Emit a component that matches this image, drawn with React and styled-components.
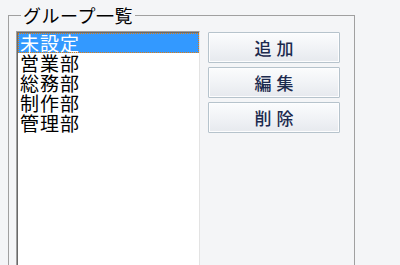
import React, { useState } from "react";
import styled, { createGlobalStyle } from "styled-components";

const GlobalStyle = createGlobalStyle`
  html, body {
    margin: 0;
    padding: 0;
    background: #f4f5f7;
    overflow: hidden;
  }
`;

const groups = ["未設定", "営業部", "総務部", "制作部", "管理部"];
const actions = ["追加", "編集", "削除"];

const App = () => {
  const [selected, setSelected] = useState(0);

  return (
    <Page>
      <GlobalStyle />
      <GroupBox>
        <Legend>グループ一覧</Legend>
        <Body>
          <ListBox>
            {groups.map((name, i) => (
              <ListItem
                key={name}
                $active={i === selected}
                onClick={() => setSelected(i)}
              >
                {name}
              </ListItem>
            ))}
          </ListBox>
          <ButtonColumn>
            {actions.map((label) => (
              <ActionButton key={label}>{label}</ActionButton>
            ))}
          </ButtonColumn>
        </Body>
      </GroupBox>
    </Page>
  );
};

const Page = styled.div`
  width: 400px;
  height: 265px;
  padding: 2px 0 0 8px;
  box-sizing: border-box;
  font-family: "Noto Sans CJK JP", "Noto Sans", sans-serif;
`;

const GroupBox = styled.fieldset`
  width: 347px;
  height: 300px;
  box-sizing: border-box;
  margin: 0;
  padding: 3px 14px 0 7px;
  border: 1px solid #a0a0a0;
  min-inline-size: 0;
`;

const Legend = styled.legend`
  margin-left: 5px;
  padding: 0 2px 0 2px;
  font-size: 18px;
  line-height: 26px;
  color: #000;
  letter-spacing: 0.5px;
`;

const Body = styled.div`
  display: flex;
  gap: 8px;
  align-items: flex-start;
`;

const ListBox = styled.ul`
  list-style: none;
  margin: 0;
  padding: 1px 0 0 0;
  width: 184px;
  height: 260px;
  box-sizing: border-box;
  background: #fff;
  border-top: 1px solid #a0a0a0;
  border-left: 1px solid #a0a0a0;
  border-right: 1px solid #e3e3e3;
  box-shadow: inset 1px 1px 0 #696969;
`;

const ListItem = styled.li`
  height: 20px;
  margin-left: 1px;
  padding-left: 2px;
  box-sizing: border-box;
  font-size: 19px;
  line-height: 20px;
  letter-spacing: 1px;
  white-space: nowrap;
  color: ${(p) => (p.$active ? "#fff" : "#000")};
  background: ${(p) => (p.$active ? "#3399ff" : "transparent")};
  outline: ${(p) => (p.$active ? "1px dotted #e07d10" : "none")};
  outline-offset: -1px;
  cursor: default;
`;

const ButtonColumn = styled.div`
  display: flex;
  flex-direction: column;
  gap: 4px;
  padding-top: 1px;
`;

const ActionButton = styled.button`
  width: 132px;
  height: 31px;
  margin: 0;
  padding: 0;
  border: 1px solid #b6c3cc;
  border-radius: 1px;
  background: linear-gradient(to bottom, #fbfcfd 0%, #f1f3f6 50%, #e6e9ee 100%);
  box-shadow: inset 0 0 0 1px #fdfdfe;
  font-family: "Noto Sans CJK JP", "Noto Sans", sans-serif;
  font-size: 17px;
  font-weight: 500;
  letter-spacing: 5px;
  text-indent: 5px;
  color: #1c2a4e;
  line-height: 29px;
  cursor: pointer;
`;

export default App;
